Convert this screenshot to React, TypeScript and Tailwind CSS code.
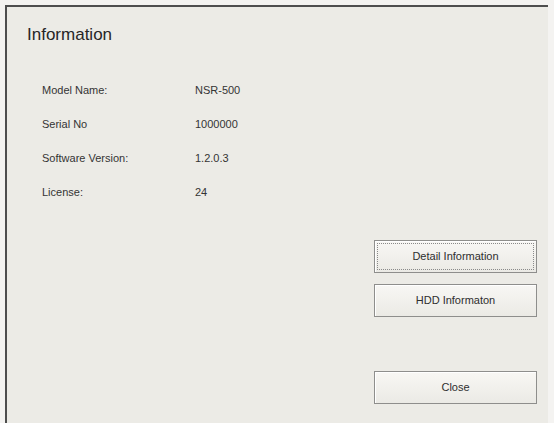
import React from 'react';

const rows: [string, string][] = [
    ['Model Name:', 'NSR-500'],
    ['Serial No', '1000000'],
    ['Software Version:', '1.2.0.3'],
    ['License:', '24'],
];

const DialogButton: React.FC<{ label: string; focused?: boolean; className?: string }> = ({ label, focused, className }) => (
    <button
        className={
            'w-[163px] h-[33px] border border-[#8e8e8c] bg-gradient-to-b from-[#f8f7f4] to-[#ebeae5] text-[11px] text-[#2e2e2e] shadow-[inset_1px_1px_0_#ffffff] ' +
            (focused ? 'outline-1 outline-dotted -outline-offset-4 outline-[#8a8a8a] ' : '') +
            (className || '')
        }
    >
        {label}
    </button>
);

export default function App() {
    return (
        <div className="h-[423px] w-[554px] overflow-hidden bg-[#f4f3f1] pt-[5px] pl-[5px] font-['Liberation_Sans',Arial,sans-serif]">
            <div className="w-[543px] h-[430px] border-t-2 border-l-2 border-[#4e4e4e] bg-[#ecebe6] flex flex-col">
                <h1 className="pt-[18px] pl-[20px] text-[17px] leading-[20px] text-[#262626]">Information</h1>

                <div className="mt-[28px] pl-[35px] flex flex-col text-[11px] text-[#343434]">
                    {rows.map(([label, value]) => (
                        <div key={label} className="h-[34px] flex items-center">
                            <span className="w-[153px]">{label}</span>
                            <span>{value}</span>
                        </div>
                    ))}
                </div>

                <div className="mt-[31px] mr-[11px] self-end flex flex-col">
                    <DialogButton label="Detail Information" focused />
                    <DialogButton label="HDD Informaton" className="mt-[11px]" />
                    <DialogButton label="Close" className="mt-[54px]" />
                </div>
            </div>
        </div>
    );
}
